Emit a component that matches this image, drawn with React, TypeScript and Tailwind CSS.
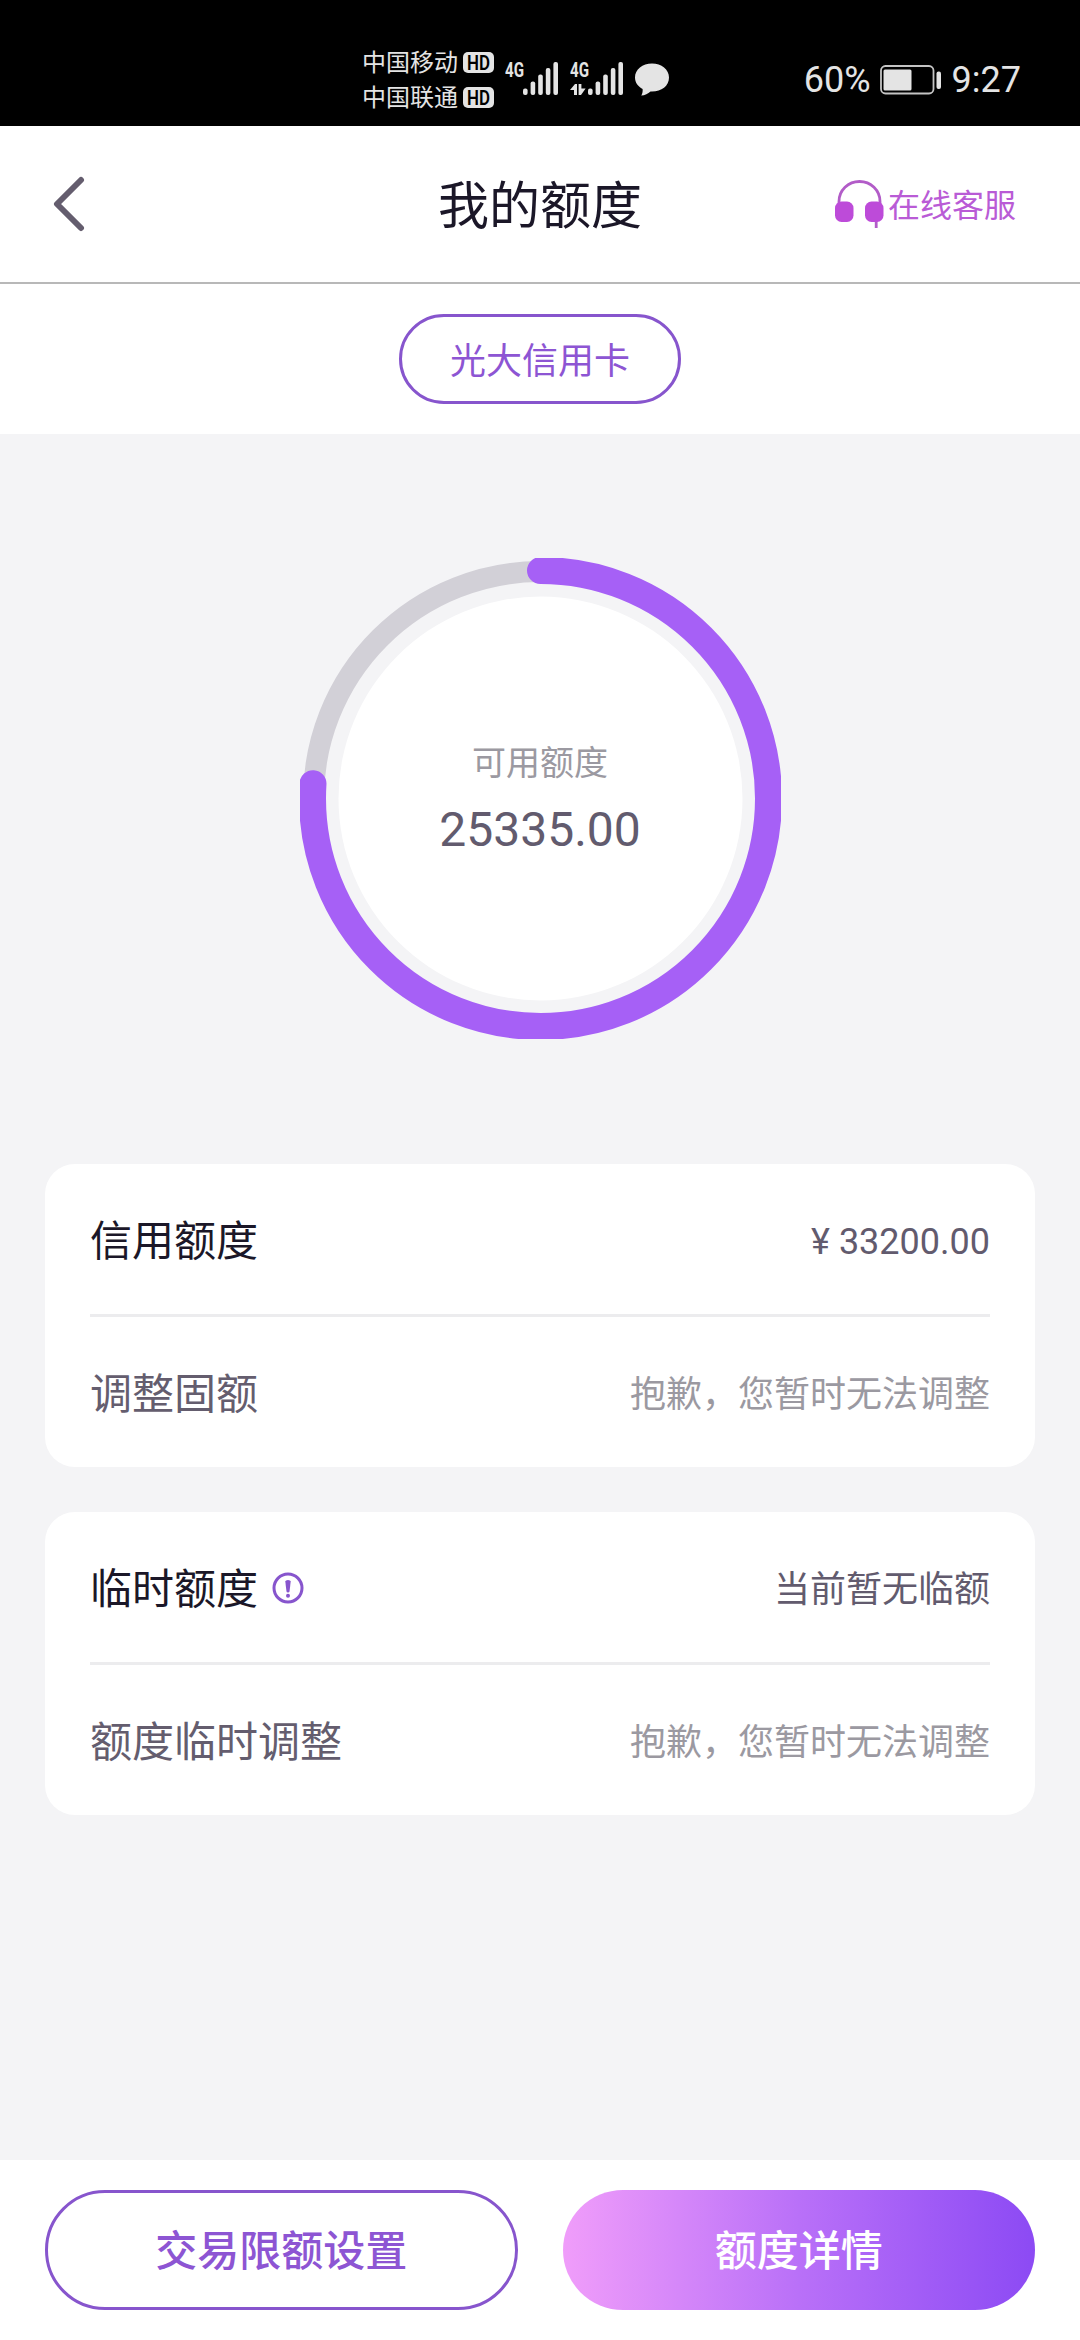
import React from 'react';

interface LimitRowProps {
  label: string;
  value: string;
  muted?: boolean;
  hint?: boolean;
}

const TOTAL_LIMIT = 33200;
const AVAILABLE_LIMIT = 25335;

const HdBadge = () => (
  <svg width="31" height="29" viewBox="0 -4 31 29">
    <rect width="31" height="21" rx="5" fill="#e4e4e4" />
    <text x="4" y="17.5" fontSize="20" fontWeight="600" textLength="23" lengthAdjust="spacingAndGlyphs" fill="#000">HD</text>
  </svg>
);

const Signal = ({ active, offset }: { active?: boolean; offset: number }) => (
  <svg width="54" height="50" viewBox="0 -8 54 50" fill="#e4e4e4">
    <text x="0" y="15" fontSize="20.5" fontWeight="700" textLength="19" lengthAdjust="spacingAndGlyphs">4G</text>
    {active && (
      <path d="M0 28 L5 22 H7 V33 H4 V28 Z M8.6 22 H11.4 V26.5 H15.6 L11 33 H8.6 Z" />
    )}
    {[6.5, 13.5, 20.5, 27, 33].map((h, i) => (
      <rect key={h} x={offset + i * 7.6} y={33 - h} width="4.6" height={h} rx="2" />
    ))}
  </svg>
);

const StatusBar = () => (
  <div className="h-[126px] bg-black text-[#e4e4e4] pt-[34px] pl-[362px] pr-[59px] flex items-center shrink-0">
    <div className="text-[24px] leading-[35px] w-[143px]">
      <div className="flex items-center gap-[5px]"><span className="pt-[2px] leading-[33px]">中国移动</span><HdBadge /></div>
      <div className="flex items-center gap-[5px]"><span className="pt-[2px] leading-[33px]">中国联通</span><HdBadge /></div>
    </div>
    <div className="flex items-center gap-[11px] -mt-[2px]">
      <Signal offset={18} />
      <Signal offset={18} active />
      <svg width="34" height="34" viewBox="0 0 34 34" fill="#e4e4e4">
        <path d="M17 1.5 C26.5 1.5 34 7.5 34 15.5 C34 24 26.5 29.5 17 29.5 L15.5 29.4 C13 31.8 10 33.2 6.2 33.6 C7.4 31.8 7.9 29.5 7.6 27 C3 24.5 0 20.5 0 15.5 C0 7.5 7.5 1.5 17 1.5 Z" />
      </svg>
    </div>
    <div className="ml-auto flex items-center text-[36px] leading-[42px]">
      <span>60%</span>
      <svg className="ml-[9px] mr-[10px]" width="62" height="30" viewBox="0 0 62 30">
        <rect x="1" y="1" width="52.5" height="27.5" rx="4.5" fill="none" stroke="#c4c4c4" strokeWidth="1.8" />
        <rect x="3.5" y="4.5" width="28" height="21" rx="1.5" fill="#e4e4e4" />
        <rect x="56.5" y="6.5" width="4.5" height="17.5" rx="2" fill="#e4e4e4" />
      </svg>
      <span>9:27</span>
    </div>
  </div>
);

const Header = () => (
  <div className="h-[158px] border-b-2 border-[#b8b8b8] bg-white grid grid-cols-3 items-center pl-[53px] pr-[64px] shrink-0">
    <svg width="32" height="56" viewBox="0 0 32 56" fill="none" stroke="#645d6e" strokeWidth="6" strokeLinecap="round" strokeLinejoin="round">
      <path d="M28 4 L4 28 L28 52" />
    </svg>
    <h1 className="text-[51px] leading-[60px] pt-[6px] text-[#1b1728] text-center whitespace-nowrap ml-[11px]">我的额度</h1>
    <div className="flex items-center justify-end gap-[4px] text-[32px] leading-[40px] text-[#b95bd6]">
      <svg width="50" height="49" viewBox="0 0 50 49">
        <path d="M5 24 V21.5 A20.5 20 0 0 1 46 21.5 V24 M42.2 40 V48" fill="none" stroke="#b25cc8" strokeWidth="2.8" />
        <rect x="1" y="21.5" width="18.5" height="20.5" rx="6.5" fill="#bd4bd9" />
        <rect x="31" y="21.5" width="18.5" height="20.5" rx="6.5" fill="#bd4bd9" />
      </svg>
      <span className="pt-[3px]">在线客服</span>
    </div>
  </div>
);

const LimitGauge = () => {
  const radius = 228;
  const length = 2 * Math.PI * radius;
  const used = length * (AVAILABLE_LIMIT / TOTAL_LIMIT - 0.003);

  return (
    <div className="grid place-items-center mt-[124px]">
      <svg className="col-start-1 row-start-1" width="481" height="481" viewBox="0 0 481 481" fill="none">
        <circle cx="240.5" cy="240.5" r="227" stroke="#d2d0d7" strokeWidth="21" />
        <circle cx="240.5" cy="240.5" r="202" fill="#fff" />
        <circle cx="240.5" cy="240.5" r={radius} stroke="#a660f6" strokeWidth="27" strokeLinecap="round"
                strokeDasharray={`${used} ${length}`} transform="rotate(-90 240.5 240.5)" />
      </svg>
      <div className="col-start-1 row-start-1 z-10 text-center">
        <p className="text-[34px] leading-[50px] text-[#9b99a1]">可用额度</p>
        <p className="text-[48px] leading-[56px] mt-[14px] mb-[2px] text-[#625b6e]">{AVAILABLE_LIMIT.toFixed(2)}</p>
      </div>
    </div>
  );
};

const HintIcon = () => (
  <svg className="ml-[14px] -mt-[4px]" width="32" height="32" viewBox="0 0 32 32" fill="#8755cd">
    <circle cx="16" cy="16" r="14" fill="none" stroke="#8755cd" strokeWidth="3" />
    <path d="M13.3 9.5 Q13.3 8 16 8 Q18.7 8 18.7 9.5 L17.5 19.5 Q17.3 20.5 16 20.5 Q14.7 20.5 14.5 19.5 Z" />
    <circle cx="16" cy="23.8" r="2" />
  </svg>
);

const LimitRow: React.FC<LimitRowProps> = ({ label, value, muted, hint }) => (
  <div className="box-content h-[144px] pt-[6px] flex items-center justify-between">
    <div className="flex items-center">
      <span className={`text-[42px] leading-[60px] ${muted ? 'text-[#645d6e]' : 'text-[#1b1728]'}`}>{label}</span>
      {hint && <HintIcon />}
    </div>
    <span className={`text-[36px] leading-[50px] ${muted ? 'text-[#9b99a1]' : 'text-[#625b6e]'}`}>{value}</span>
  </div>
);

const Card = ({ children }: { children: React.ReactNode }) => (
  <div className="mx-[45px] px-[45px] bg-white rounded-[30px] divide-y-3 divide-[#ececee]">{children}</div>
);

const App = () => (
  <div className="w-[1080px] h-[2340px] flex flex-col bg-[#f4f4f6] overflow-hidden font-['Roboto','Noto_Sans_CJK_SC',sans-serif]">
    <StatusBar />
    <Header />
    <div className="h-[150px] bg-white flex justify-center pt-[30px] shrink-0">
      <button className="w-[282px] h-[90px] pt-[5px] rounded-full border-3 border-[#8755cd] text-[36px] text-[#8d55d3]">光大信用卡</button>
    </div>

    <LimitGauge />

    <div className="mt-[125px] flex flex-col gap-[45px]">
      <Card>
        <LimitRow label="信用额度" value={`¥ ${TOTAL_LIMIT.toFixed(2)}`} />
        <LimitRow label="调整固额" value="抱歉，您暂时无法调整" muted />
      </Card>
      <Card>
        <LimitRow label="临时额度" value="当前暂无临额" hint />
        <LimitRow label="额度临时调整" value="抱歉，您暂时无法调整" muted />
      </Card>
    </div>

    <div className="mt-auto h-[180px] bg-white px-[45px] py-[30px] grid grid-cols-2 gap-[45px] text-[42px] font-medium">
      <button className="rounded-full pt-[3px] border-3 border-[#8755cd] text-[#8d55d3]">交易限额设置</button>
      <button className="rounded-full pt-[3px] bg-linear-to-r/srgb from-[#f09dfa] via-[#b970f8] to-[#8c4af4] text-white">额度详情</button>
    </div>
  </div>
);

export default App;
